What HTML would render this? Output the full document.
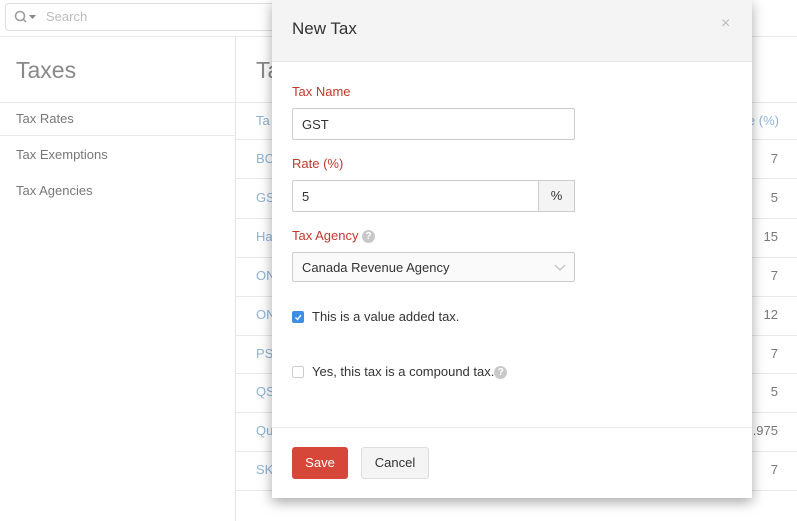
<!DOCTYPE html>
<html><head><style>
*{box-sizing:border-box;margin:0;padding:0}
body{width:797px;height:521px;overflow:hidden;background:#fff;font-family:"Liberation Sans",sans-serif;position:relative;color:#333}
.abs{position:absolute;white-space:nowrap}
.search{left:5px;top:3px;width:300px;height:28px;border:1px solid #ddd;border-radius:4px;background:#fff}
.search span{position:absolute;left:40px;top:5px;font-size:13px;color:#bbb}
.topline{left:0;top:36px;width:797px;height:1px;background:#e8e8e8}
.vline{left:235px;top:36px;width:1px;height:485px;background:#e5e5e5}
.side{font-size:13px;color:#777;left:16px}
.hl{height:1px;background:#e8e8e8}
.cell{font-size:13px;color:#8fb4d6;left:256px}
.num{font-size:13px;color:#777;right:19px;text-align:right}
.modal{left:272px;top:0;width:480px;height:498px;background:#fff;box-shadow:0 4px 12px rgba(0,0,0,0.35)}
.mh{left:0;top:0;width:480px;height:62px;background:#f4f4f4;border-bottom:1px solid #e5e5e5}
.lbl{font-size:13px;color:#c0392b;left:20px}
.inp{left:20px;width:283px;height:32px;border:1px solid #ccc;border-radius:2px;font-size:13px;padding:8px 9px;color:#333;background:#fff}
.cb{left:20px;width:12px;height:12px;border:1px solid #ccc;border-radius:2px;background:#fff}
.q{display:inline-block;width:13px;height:13px;border-radius:50%;background:#c8c8c8;color:#fff;font-size:10px;font-weight:bold;text-align:center;line-height:13px;vertical-align:1px}
</style></head><body>
<div class="abs search">
<svg class="abs" style="left:8px;top:6px" width="26" height="14"><circle cx="6" cy="6" r="4.5" fill="none" stroke="#999" stroke-width="1.5"/><line x1="9.3" y1="9.3" x2="12" y2="12" stroke="#999" stroke-width="1.5"/><path d="M15 5h7l-3.5 4z" fill="#888"/></svg>
<span>Search</span></div>
<div class="abs topline"></div>
<div class="abs vline"></div>
<div class="abs" style="left:16px;top:57px;font-size:23px;color:#888">Taxes</div>
<div class="abs" style="left:256px;top:57px;font-size:23px;color:#888">Ta</div>
<div class="abs hl" style="left:0;top:102px;width:235px"></div>
<div class="abs hl" style="left:0;top:135px;width:235px"></div>
<div class="abs side" style="top:111px">Tax Rates</div>
<div class="abs side" style="top:147px">Tax Exemptions</div>
<div class="abs side" style="top:183px">Tax Agencies</div>
<div class="abs hl" style="left:236px;top:102px;width:561px"></div>
<div class="abs cell" style="top:113px">Ta</div>
<div class="abs" style="right:18px;top:113px;font-size:13px;color:#8fb4d6">Rate (%)</div>
<div class="abs hl" style="left:236px;top:139px;width:561px"></div>
<div class="abs hl" style="left:236px;top:178px;width:561px"></div>
<div class="abs hl" style="left:236px;top:218px;width:561px"></div>
<div class="abs hl" style="left:236px;top:257px;width:561px"></div>
<div class="abs hl" style="left:236px;top:296px;width:561px"></div>
<div class="abs hl" style="left:236px;top:335px;width:561px"></div>
<div class="abs hl" style="left:236px;top:373px;width:561px"></div>
<div class="abs hl" style="left:236px;top:412px;width:561px"></div>
<div class="abs hl" style="left:236px;top:451px;width:561px"></div>
<div class="abs hl" style="left:236px;top:490px;width:561px"></div>
<div class="abs cell" style="top:151px">BC</div><div class="abs num" style="top:151px">7</div>
<div class="abs cell" style="top:190px">GS</div><div class="abs num" style="top:190px">5</div>
<div class="abs cell" style="top:229px">Ha</div><div class="abs num" style="top:229px">15</div>
<div class="abs cell" style="top:268px">ON</div><div class="abs num" style="top:268px">7</div>
<div class="abs cell" style="top:307px">ON</div><div class="abs num" style="top:307px">12</div>
<div class="abs cell" style="top:346px">PS</div><div class="abs num" style="top:346px">7</div>
<div class="abs cell" style="top:384px">QS</div><div class="abs num" style="top:384px">5</div>
<div class="abs cell" style="top:423px">Qu</div><div class="abs num" style="top:423px">.975</div>
<div class="abs cell" style="top:462px">SK</div><div class="abs num" style="top:462px">7</div>

<div class="abs modal">
<div class="abs mh"><div class="abs" style="left:20px;top:19px;font-size:17px;color:#333">New Tax</div>
<div class="abs" style="left:449px;top:15px;font-size:16px;color:#bbb">×</div></div>
<div class="abs lbl" style="top:84px">Tax Name</div>
<div class="abs inp" style="top:108px">GST</div>
<div class="abs lbl" style="top:156px">Rate (%)</div>
<div class="abs inp" style="top:180px;width:283px">5</div>
<div class="abs" style="left:266px;top:180px;width:37px;height:32px;border:1px solid #ccc;background:#f4f4f4;font-size:13px;text-align:center;line-height:30px">%</div>
<div class="abs lbl" style="top:228px">Tax Agency <span class="q">?</span></div>
<div class="abs inp" style="top:252px;height:30px;padding-top:7px;background:#fafafa">Canada Revenue Agency
<svg class="abs" style="right:8px;top:11px" width="12" height="8"><path d="M1 1l5 5 5-5" fill="none" stroke="#bbb" stroke-width="1.2"/></svg></div>
<div class="abs cb" style="top:311px;background:#3d8fe6;border-color:#3d8fe6"><svg width="10" height="10" style="position:absolute;left:0;top:0"><path d="M2.5 5.5l2 2 3.5-4.5" fill="none" stroke="#fff" stroke-width="1.3"/></svg></div>
<div class="abs" style="left:40px;top:309px;font-size:13px">This is a value added tax.</div>
<div class="abs cb" style="top:366px"></div>
<div class="abs" style="left:40px;top:364px;font-size:13px">Yes, this tax is a compound tax.<span class="q">?</span></div>
<div class="abs hl" style="left:0;top:427px;width:480px"></div>
<div class="abs" style="left:20px;top:447px;width:56px;height:32px;background:#d6473a;border-radius:3px;color:#fff;font-size:13px;text-align:center;line-height:32px">Save</div>
<div class="abs" style="left:89px;top:447px;width:68px;height:32px;background:#f4f4f4;border:1px solid #ddd;border-radius:3px;font-size:13px;text-align:center;line-height:30px">Cancel</div>
</div>
</body></html>
